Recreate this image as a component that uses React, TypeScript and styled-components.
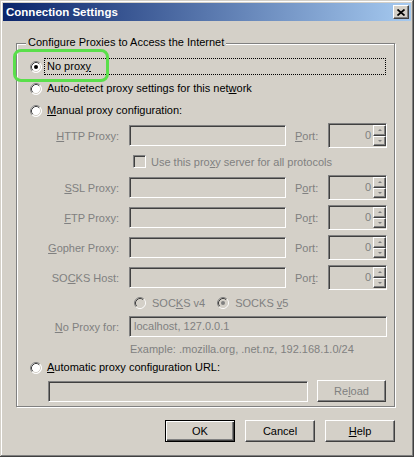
import React from "react";
import styled, { createGlobalStyle, css } from "styled-components";

const GlobalStyle = createGlobalStyle`
  html, body {
    margin: 0;
    padding: 0;
    background: #d4d0c8;
  }
`;

// classic 3D edges
const sunken = css`
  box-sizing: border-box;
  border: 1px solid;
  border-color: #808080 #ffffff #ffffff #808080;
  box-shadow: inset 1px 1px #404040, inset -1px -1px #d4d0c8;
`;

const raised = css`
  box-sizing: border-box;
  border: 1px solid;
  border-color: #ffffff #404040 #404040 #ffffff;
  box-shadow: inset -1px -1px #808080, inset 1px 1px #d4d0c8;
`;

const Window = styled.div`
  position: relative;
  box-sizing: border-box;
  width: 414px;
  height: 457px;
  padding: 3px;
  display: flex;
  flex-direction: column;
  background: #d4d0c8;
  box-shadow: inset -1px -1px #404040, inset 1px 1px #d4d0c8,
    inset -2px -2px #808080, inset 2px 2px #ffffff;
  font: 11px "Liberation Sans", Arial, sans-serif;
  color: #000;
`;

const TitleBar = styled.div`
  height: 18px;
  display: flex;
  align-items: center;
  padding: 0 2px 0 3px;
  background: linear-gradient(to right, #0a246a, #a6caf0);
`;

const Title = styled.div`
  flex: 1;
  color: #fff;
  font-weight: bold;
  font-size: 11.5px;
`;

const CloseButton = styled.div`
  ${raised};
  width: 16px;
  height: 14px;
  display: flex;
  align-items: center;
  justify-content: center;
  background: #d4d0c8;
`;

const Body = styled.div`
  display: flex;
  flex-direction: column;
  padding: 22px 16px 0 13px;
`;

const GroupBox = styled.div`
  display: flex;
  flex-direction: column;
  padding: 0 8px 4px 13px;
  border: 1px solid #808080;
  box-shadow: inset 1px 1px #ffffff, 1px 1px #ffffff;
`;

const Legend = styled.div`
  align-self: flex-start;
  margin: -8px 0 9px -4px;
  padding: 0 2px;
  line-height: 13px;
  background: #d4d0c8;
`;

const RadioRow = styled.div<{ $top?: number }>`
  display: flex;
  align-items: center;
  gap: 2px;
  height: 17px;
  margin-top: ${(p) => p.$top ?? 0}px;
`;

const RadioLabel = styled.span<{ $focus?: boolean }>`
  ${(p) => p.$focus && "flex: 1;"}
  box-sizing: border-box;
  height: 17px;
  line-height: 15px;
  padding-left: 2px;
  border: 1px ${(p) => (p.$focus ? "dotted #000" : "solid transparent")};
`;

const ProxyGrid = styled.div`
  display: grid;
  grid-template-columns: 99px 157px 42px 59px;
  grid-template-rows: 25px 17px 25px 25px 25px 25px 16px 21px 13px;
  row-gap: 5px;
  align-items: center;
  margin-top: 4px;
  color: #808080;
`;

const FieldLabel = styled.span`
  text-align: right;
  padding-right: 10px;
`;

const PortLabel = styled.span`
  padding-left: 9px;
`;

const TextBox = styled.div<{ $span?: boolean; $width?: number }>`
  ${sunken};
  ${(p) => p.$span && "grid-column: 2 / 5;"}
  ${(p) => p.$width && `width: ${p.$width}px;`}
  height: 21px;
  padding-left: 4px;
  line-height: 19px;
  color: #808080;
  background: #d4d0c8;
`;

const SpinBox = styled.div`
  ${sunken};
  height: 25px;
  display: flex;
  background: #d4d0c8;
`;

const SpinValue = styled.span`
  flex: 1;
  text-align: right;
  padding-right: 2px;
  line-height: 23px;
  color: #808080;
`;

const SpinButtons = styled.div`
  width: 13px;
  display: flex;
  flex-direction: column;
  padding: 1px 0;
`;

const SpinButton = styled.div<{ $down?: boolean }>`
  ${raised};
  flex: 1;
  display: flex;
  align-items: center;
  justify-content: center;
  background: #d4d0c8;

  &::after {
    content: "";
    border-left: 2px solid transparent;
    border-right: 2px solid transparent;
    ${(p) =>
      p.$down
        ? "border-top: 2px solid #808080;"
        : "border-bottom: 2px solid #808080;"}
  }
`;

const SpanRow = styled.div<{ $pad?: number; $gap?: number }>`
  grid-column: 2 / 5;
  display: flex;
  align-items: center;
  gap: ${(p) => p.$gap ?? 5}px;
  padding-left: ${(p) => p.$pad ?? 0}px;
`;

const CheckBox = styled.span`
  ${sunken};
  width: 13px;
  height: 13px;
  background: #d4d0c8;
`;

const RadioPair = styled.span`
  display: flex;
  align-items: center;
  gap: 6px;
`;

const UrlRow = styled.div`
  display: flex;
  align-items: center;
  gap: 9px;
  height: 22px;
  margin-top: 4px;
  padding-left: 18px;
`;

const Button = styled.div<{ $default?: boolean; $disabled?: boolean; $width?: number }>`
  box-sizing: border-box;
  width: ${(p) => p.$width ?? 70}px;
  height: 22px;
  display: flex;
  align-items: center;
  justify-content: center;
  background: #d4d0c8;
  color: ${(p) => (p.$disabled ? "#808080" : "#000")};
  ${(p) =>
    p.$default
      ? css`
          border: 1px solid #000;
          box-shadow: inset 1px 1px #ffffff, inset -1px -1px #404040,
            inset -2px -2px #808080;
        `
      : raised}
`;

const ButtonRow = styled.div`
  display: flex;
  justify-content: flex-end;
  gap: 10px;
  margin-top: 13px;
`;

const Highlight = styled.div`
  position: absolute;
  left: 13px;
  top: 49px;
  width: 96px;
  height: 33px;
  box-sizing: border-box;
  border: 3px solid #5adf4b;
  border-radius: 8px;
  pointer-events: none;
`;

const Key = styled.u``;

const Radio = ({ checked, disabled }: { checked?: boolean; disabled?: boolean }) => (
  <svg width="12" height="12" viewBox="0 0 12 12" style={{ flex: "none" }}>
    <circle cx="6" cy="6" r="5.5" fill={disabled ? "#d4d0c8" : "#fff"} />
    <path d="M2.11 9.89A5.5 5.5 0 0 1 9.89 2.11" fill="none" stroke="#808080" />
    <path d="M9.89 2.11A5.5 5.5 0 0 1 2.11 9.89" fill="none" stroke="#fff" />
    <path d="M2.82 9.18A4.5 4.5 0 0 1 9.18 2.82" fill="none" stroke="#404040" />
    <path d="M9.18 2.82A4.5 4.5 0 0 1 2.82 9.18" fill="none" stroke="#d4d0c8" />
    {checked && <circle cx="6" cy="6" r="2" fill={disabled ? "#808080" : "#000"} />}
  </svg>
);

const Spinner = () => (
  <SpinBox>
    <SpinValue>0</SpinValue>
    <SpinButtons>
      <SpinButton />
      <SpinButton $down />
    </SpinButtons>
  </SpinBox>
);

const rows = [
  { label: <><Key>H</Key>TTP Proxy:</>, port: <><Key>P</Key>ort:</> },
  { label: <><Key>S</Key>SL Proxy:</>, port: <>P<Key>o</Key>rt:</> },
  { label: <><Key>F</Key>TP Proxy:</>, port: <>Po<Key>r</Key>t:</> },
  { label: <><Key>G</Key>opher Proxy:</>, port: <>Port:</> },
  { label: <>SO<Key>C</Key>KS Host:</>, port: <>Por<Key>t</Key>:</> },
];

const ProxyRow = ({ label, port }: { label: React.ReactNode; port: React.ReactNode }) => (
  <>
    <FieldLabel>{label}</FieldLabel>
    <TextBox />
    <PortLabel>{port}</PortLabel>
    <Spinner />
  </>
);

export default function App() {
  return (
    <>
      <GlobalStyle />
      <Window>
        <TitleBar>
          <Title>Connection Settings</Title>
          <CloseButton>
            <svg width="8" height="7" viewBox="0 0 8 7">
              <path d="M0.5 0.5L7.5 6.5M7.5 0.5L0.5 6.5" stroke="#000" strokeWidth="1.7" />
            </svg>
          </CloseButton>
        </TitleBar>

        <Body>
          <GroupBox>
            <Legend>Configure Proxies to Access the Internet</Legend>

            <RadioRow>
              <Radio checked />
              <RadioLabel $focus>
                No prox<Key>y</Key>
              </RadioLabel>
            </RadioRow>
            <RadioRow $top={5}>
              <Radio />
              <RadioLabel>
                Auto-detect proxy settings for this net<Key>w</Key>ork
              </RadioLabel>
            </RadioRow>
            <RadioRow $top={5}>
              <Radio />
              <RadioLabel>
                <Key>M</Key>anual proxy configuration:
              </RadioLabel>
            </RadioRow>

            <ProxyGrid>
              <ProxyRow {...rows[0]} />
              <SpanRow $pad={4}>
                <CheckBox />
                <span>
                  Use this pro<Key>x</Key>y server for all protocols
                </span>
              </SpanRow>
              {rows.slice(1).map((r, i) => (
                <ProxyRow key={i} {...r} />
              ))}
              <SpanRow $pad={5} $gap={12}>
                <RadioPair>
                  <Radio disabled />
                  <span>
                    SOC<Key>K</Key>S v4
                  </span>
                </RadioPair>
                <RadioPair>
                  <Radio disabled checked />
                  <span>
                    SOCKS <Key>v</Key>5
                  </span>
                </RadioPair>
              </SpanRow>
              <FieldLabel>
                <Key>N</Key>o Proxy for:
              </FieldLabel>
              <TextBox $span>localhost, 127.0.0.1</TextBox>
              <SpanRow $pad={1}>Example: .mozilla.org, .net.nz, 192.168.1.0/24</SpanRow>
            </ProxyGrid>

            <RadioRow $top={4}>
              <Radio />
              <RadioLabel>
                <Key>A</Key>utomatic proxy configuration URL:
              </RadioLabel>
            </RadioRow>
            <UrlRow>
              <TextBox $width={260} />
              <Button $disabled $width={69}>
                Re<Key>l</Key>oad
              </Button>
            </UrlRow>
          </GroupBox>

          <ButtonRow>
            <Button $default>OK</Button>
            <Button>Cancel</Button>
            <Button>
              <Key>H</Key>elp
            </Button>
          </ButtonRow>
        </Body>

        <Highlight />
      </Window>
    </>
  );
}
